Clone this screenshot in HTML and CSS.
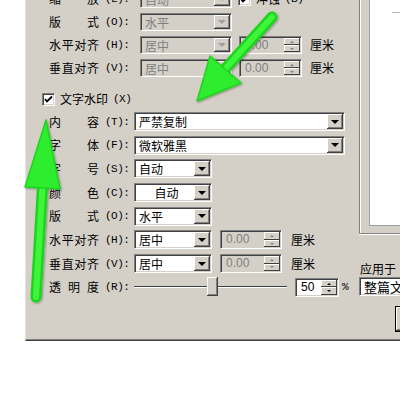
FILE: index.html
```html
<!DOCTYPE html>
<html lang="zh-CN">

<head>
    <meta charset="UTF-8">
    <meta name="viewport" content="width=device-width, initial-scale=1.0">
    <title>水印</title>
    <link rel="stylesheet" href="styles.css">
</head>

<body>
    <div class="page">
        <div class="dialog">
            <div class="main">
                <!-- picture watermark part (disabled) -->
                <div class="row top first">
                    <span class="lbl"><i>缩</i><i>放</i></span><span class="key">(L):</span>
                    <div class="combo off w92"><span class="val">自动</span><span class="btn"></span></div>
                    <div class="chk small">
                        <span class="box"><svg width="9" height="9" viewBox="0 0 9 9"><polyline points="1,4 3,6.5 8,1.5" fill="none" stroke="#000" stroke-width="1.8"/></svg></span>
                        <span>冲蚀</span><span class="key short">(B)</span>
                    </div>
                </div>
                <div class="row top">
                    <span class="lbl"><i>版</i><i>式</i></span><span class="key">(O):</span>
                    <div class="combo off w92"><span class="val">水平</span><span class="btn"></span></div>
                </div>
                <div class="row top">
                    <span class="lbl"><i>水</i><i>平</i><i>对</i><i>齐</i></span><span class="key">(H):</span>
                    <div class="combo off w92"><span class="val">居中</span><span class="btn"></span></div>
                    <div class="spin off w63"><span class="val">0.00</span><span class="arrows"><span class="up"></span><span class="down"></span></span></div>
                    <span class="unit">厘米</span>
                </div>
                <div class="row top">
                    <span class="lbl"><i>垂</i><i>直</i><i>对</i><i>齐</i></span><span class="key">(V):</span>
                    <div class="combo off w92"><span class="val">居中</span><span class="btn"></span></div>
                    <div class="spin off w63"><span class="val">0.00</span><span class="arrows"><span class="up"></span><span class="down"></span></span></div>
                    <span class="unit">厘米</span>
                </div>

                <!-- text watermark part -->
                <div class="chk textmark">
                    <span class="box"><svg width="9" height="9" viewBox="0 0 9 9"><polyline points="1,4 3,6.5 8,1.5" fill="none" stroke="#000" stroke-width="1.8"/></svg></span>
                    <span>文字水印</span><span class="key short">(X)</span>
                </div>
                <div class="row">
                    <span class="lbl"><i>内</i><i>容</i></span><span class="key">(T):</span>
                    <div class="combo w211"><span class="val">严禁复制</span><span class="btn"></span></div>
                </div>
                <div class="row">
                    <span class="lbl"><i>字</i><i>体</i></span><span class="key">(F):</span>
                    <div class="combo w211"><span class="val">微软雅黑</span><span class="btn"></span></div>
                </div>
                <div class="row">
                    <span class="lbl"><i>字</i><i>号</i></span><span class="key">(S):</span>
                    <div class="combo w78"><span class="val">自动</span><span class="btn"></span></div>
                </div>
                <div class="row">
                    <span class="lbl"><i>颜</i><i>色</i></span><span class="key">(C):</span>
                    <div class="combo w78"><span class="val center">自动</span><span class="btn"></span></div>
                </div>
                <div class="row">
                    <span class="lbl"><i>版</i><i>式</i></span><span class="key">(O):</span>
                    <div class="combo w78"><span class="val">水平</span><span class="btn"></span></div>
                </div>
                <div class="row">
                    <span class="lbl"><i>水</i><i>平</i><i>对</i><i>齐</i></span><span class="key">(H):</span>
                    <div class="combo w78"><span class="val">居中</span><span class="btn"></span></div>
                    <div class="spin off w62"><span class="val">0.00</span><span class="arrows"><span class="up"></span><span class="down"></span></span></div>
                    <span class="unit low">厘米</span>
                </div>
                <div class="row">
                    <span class="lbl"><i>垂</i><i>直</i><i>对</i><i>齐</i></span><span class="key">(V):</span>
                    <div class="combo w78"><span class="val">居中</span><span class="btn"></span></div>
                    <div class="spin off w62"><span class="val">0.00</span><span class="arrows"><span class="up"></span><span class="down"></span></span></div>
                    <span class="unit low">厘米</span>
                </div>
                <div class="row">
                    <span class="lbl"><i>透</i><i>明</i><i>度</i></span><span class="key">(R):</span>
                    <div class="slider"><span class="track"></span><span class="thumb"></span></div>
                    <div class="spin w44"><span class="val">50</span><span class="arrows"><span class="up"></span><span class="down"></span></span></div>
                    <span class="pct">%</span>
                </div>
            </div>

            <div class="side">
                <div class="pgroup">
                    <div class="preview"><div class="dash"></div></div>
                </div>
                <div class="apply">应用于</div>
                <div class="combo apply-combo"><span class="val">整篇文档</span><span class="btn"></span></div>
                <div class="defbtn">确定</div>
            </div>
        </div>

        <!-- green arrows drawn over the screenshot -->
        <svg class="arrows-overlay" width="400" height="400" viewBox="0 0 400 400">
            <defs>
                <filter id="shadow" x="-20%" y="-20%" width="140%" height="140%">
                    <feDropShadow dx="1" dy="1" stdDeviation="1" flood-color="#000" flood-opacity="0.35"/>
                </filter>
            </defs>
            <g filter="url(#shadow)">
                <line x1="272" y1="17" x2="225" y2="69" stroke="#1fd41f" stroke-width="11" stroke-linecap="round"/>
                <line x1="272" y1="17" x2="225" y2="69" stroke="#3cf53a" stroke-width="6" stroke-linecap="round"/>
                <polygon points="210,56 197,101 241,83" fill="#2fec2d" stroke="#1fd41f" stroke-width="1.5" stroke-linejoin="round"/>
            </g>
            <g filter="url(#shadow)">
                <line x1="36" y1="297" x2="42.5" y2="186" stroke="#1fd41f" stroke-width="11" stroke-linecap="round"/>
                <line x1="36" y1="297" x2="42.5" y2="186" stroke="#3cf53a" stroke-width="6" stroke-linecap="round"/>
                <polygon points="25,187 46,120 60,189" fill="#2fec2d" stroke="#1fd41f" stroke-width="1.5" stroke-linejoin="round"/>
            </g>
        </svg>
    </div>
</body>

</html>
```

FILE: styles.css
```css
/* Reset */
* {
    box-sizing: border-box;
}

body {
    margin: 0;
    background-color: #fff;
    font-family: "Noto Sans CJK SC", sans-serif;
    font-size: 12px;
    color: #000;
    overflow: hidden;
}

.page {
    position: relative;
    width: 400px;
    height: 400px;
}

/* Dialog window */
.dialog {
    display: flex;
    margin-left: 25px;
    height: 341px;
    background-color: #d4d0c8;
    border-left: 1px solid #e6e4de;
    border-bottom: 1px solid #404040;
    box-shadow: inset 0 -1px #808080;
    overflow: hidden;
}

.main {
    flex: none;
    width: 333px;
    display: flex;
    flex-direction: column;
    padding-left: 23px;
}

/* Rows */
.row {
    flex: none;
    display: flex;
    align-items: center;
    height: 19px;
    margin-bottom: 4.7px;
}

.row.top {
    height: 18px;
    margin-bottom: 5px;
}

.row.first {
    margin-top: -10px;
}

.lbl {
    display: flex;
    justify-content: space-between;
    width: 50px;
    line-height: 14px;
}

.lbl i {
    font-style: normal;
}

.key {
    font-family: "Liberation Mono", monospace;
    font-size: 11px;
    letter-spacing: -0.5px;
    padding-left: 6px;
    width: 35px;
    flex: none;
}

.row.top .key {
    width: 41px;
}

.key.short,
.row.top .key.short {
    width: auto;
    padding-left: 5px;
}

/* Combo box */
.combo {
    flex: none;
    display: flex;
    height: 100%;
    background-color: #fff;
    border: 1px solid;
    border-color: #808080 #fff #fff #808080;
    box-shadow: inset 1px 1px #404040, inset -1px -1px #d4d0c8;
    padding: 1px;
}

.combo .val {
    flex: 1;
    padding-left: 3px;
    line-height: 15px;
    white-space: nowrap;
    overflow: hidden;
}

.combo .val.center {
    text-align: center;
}

.combo .btn {
    flex: none;
    width: 16px;
    background-color: #d4d0c8;
    box-shadow: inset -1px -1px #404040, inset 1px 1px #fff, inset -2px -2px #808080;
    display: flex;
    align-items: center;
    justify-content: center;
}

.combo .btn::after {
    content: "";
    border-left: 4px solid transparent;
    border-right: 4px solid transparent;
    border-top: 4px solid #000;
}

.combo.off,
.spin.off {
    background-color: #d4d0c8;
    color: #808080;
}

.combo.off .btn::after {
    border-top-color: #a0a0a0;
}

.w92 { width: 92px; }
.w78 { width: 78px; }
.w211 { width: 211px; }

/* Spinner */
.spin {
    flex: none;
    display: flex;
    height: 100%;
    background-color: #fff;
    border: 1px solid;
    border-color: #808080 #fff #fff #808080;
    box-shadow: inset 1px 1px #404040, inset -1px -1px #d4d0c8;
    padding: 1px;
}

.spin .val {
    flex: 1;
    padding-left: 4px;
    font-family: "Liberation Sans", sans-serif;
    font-size: 12px;
    line-height: 15px;
}

.spin .arrows {
    flex: none;
    width: 16px;
    display: flex;
    flex-direction: column;
}

.spin .up,
.spin .down {
    flex: 1;
    background-color: #d4d0c8;
    box-shadow: inset -1px -1px #404040, inset 1px 1px #fff;
    display: flex;
    align-items: center;
    justify-content: center;
}

.spin .up::after {
    content: "";
    border-left: 2px solid transparent;
    border-right: 2px solid transparent;
    border-bottom: 2px solid #000;
}

.spin .down::after {
    content: "";
    border-left: 2px solid transparent;
    border-right: 2px solid transparent;
    border-top: 2px solid #000;
}

.spin.off .up::after { border-bottom-color: #808080; }
.spin.off .down::after { border-top-color: #808080; }

.row.top .spin { margin-left: 7px; }
.row .spin { margin-left: 8px; }

.w63 { width: 63px; }
.w62 { width: 62px; }
.w44 { width: 44px; }

.unit {
    margin-left: 8px;
    line-height: 14px;
}

.unit.low {
    margin-left: 9px;
}

.pct {
    margin-left: 3px;
    font-family: "Liberation Mono", monospace;
    font-size: 11px;
}

/* Checkboxes */
.chk {
    display: flex;
    align-items: center;
    line-height: 14px;
}

.chk .box {
    flex: none;
    width: 13px;
    height: 13px;
    background-color: #fff;
    border: 1px solid;
    border-color: #808080 #fff #fff #808080;
    box-shadow: inset 1px 1px #404040, inset -1px -1px #d4d0c8;
    display: flex;
    align-items: center;
    justify-content: center;
    margin-right: 5px;
}

.chk.small {
    margin-left: 6px;
}

.chk.textmark {
    flex: none;
    height: 18px;
    margin-left: -7px;
    margin-top: 8px;
    margin-bottom: 4px;
}

/* Slider */
.slider {
    position: relative;
    flex: none;
    width: 153px;
    height: 100%;
    display: flex;
    align-items: center;
}

.slider .track {
    width: 100%;
    height: 2px;
    border-top: 1px solid #404040;
    border-bottom: 1px solid #fff;
}

.slider .thumb {
    position: absolute;
    left: 73px;
    top: -1px;
    width: 11px;
    height: 19px;
    background-color: #d4d0c8;
    box-shadow: inset -1px -1px #404040, inset 1px 1px #fff, inset -2px -2px #808080;
}

/* Right side */
.side {
    flex: none;
    width: 120px;
}

.pgroup {
    height: 234px;
    border-left: 1px solid #808080;
    border-bottom: 1px solid #808080;
    box-shadow: inset 1px 0 #fff, 0 1px #fff;
}

.preview {
    margin-left: 9px;
    height: 226px;
    background-color: #fff;
    border-left: 1px solid #a0a0a0;
    border-bottom: 1px solid #a0a0a0;
    padding-top: 12px;
}

.dash {
    margin-left: 22px;
    width: 12px;
    height: 1px;
    background-color: #b8b8b8;
}

.apply {
    margin-top: 28px;
    padding-left: 1px;
    line-height: 14px;
}

.apply-combo {
    margin-top: 1px;
    width: 100px;
    height: 19px;
    font-size: 13px;
}

.defbtn {
    margin-top: 10px;
    margin-left: 36px;
    width: 75px;
    height: 26px;
    border: 1px solid #000;
    background-color: #d4d0c8;
    box-shadow: inset -1px -1px #404040, inset 1px 1px #fff, inset -2px -2px #808080;
    text-align: center;
    line-height: 24px;
}

/* Overlay arrows */
.arrows-overlay {
    position: absolute;
    top: 0;
    left: 0;
    pointer-events: none;
}
```
